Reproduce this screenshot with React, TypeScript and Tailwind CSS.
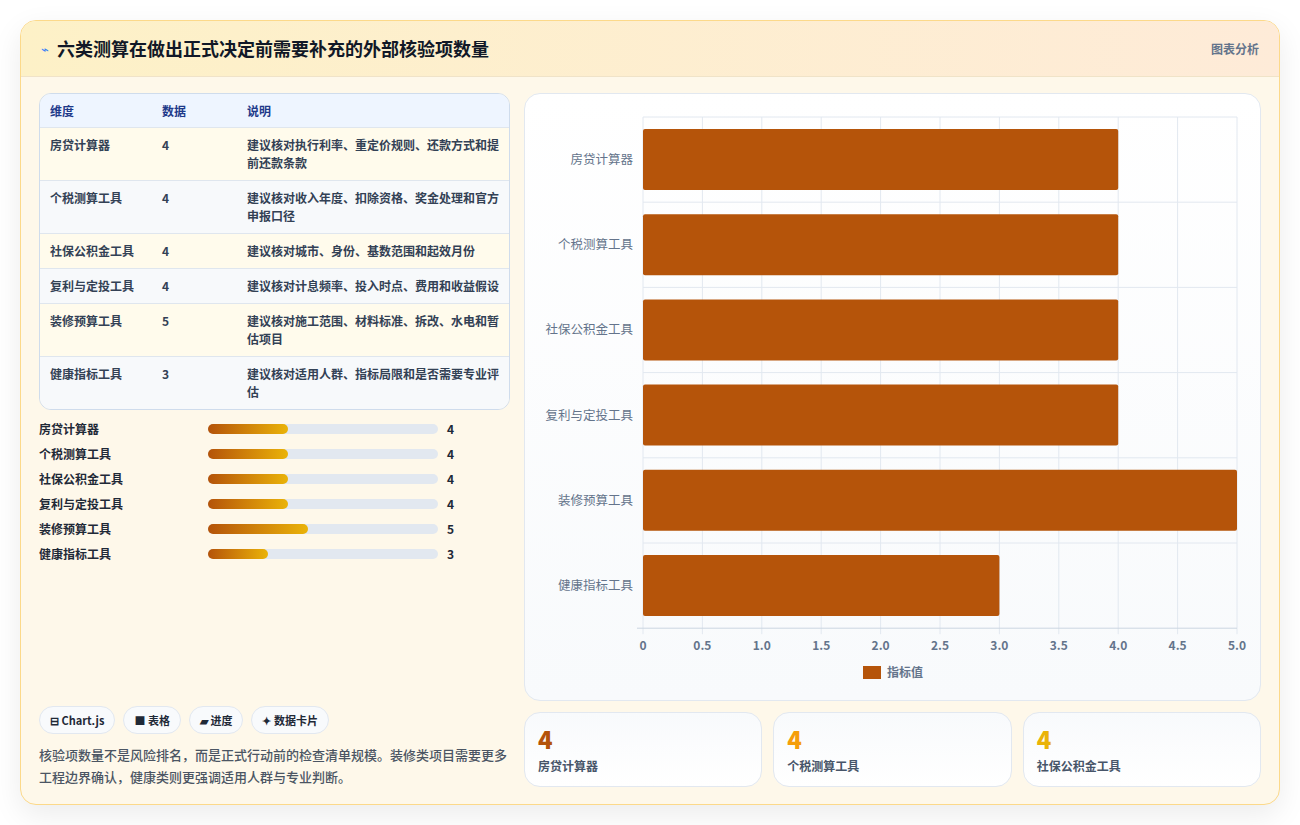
const rows = [
  { name: "房贷计算器", v: 4, note: "建议核对执行利率、重定价规则、还款方式和提前还款条款" },
  { name: "个税测算工具", v: 4, note: "建议核对收入年度、扣除资格、奖金处理和官方申报口径" },
  { name: "社保公积金工具", v: 4, note: "建议核对城市、身份、基数范围和起效月份" },
  { name: "复利与定投工具", v: 4, note: "建议核对计息频率、投入时点、费用和收益假设" },
  { name: "装修预算工具", v: 5, note: "建议核对施工范围、材料标准、拆改、水电和暂估项目" },
  { name: "健康指标工具", v: 3, note: "建议核对适用人群、指标局限和是否需要专业评估" },
];

const font = { fontFamily: '"Noto Sans CJK SC", "Liberation Sans", sans-serif' };

function Chart() {
  const x0 = 118, x1 = 712, y0 = 23, rowH = 85.2;
  const sx = (v: number) => x0 + ((x1 - x0) * v) / 5;
  const ticks = [0, 0.5, 1, 1.5, 2, 2.5, 3, 3.5, 4, 4.5, 5];
  return (
    <svg width="735" height="606" style={font}>
      {ticks.map((t) => (
        <line key={t} x1={sx(t)} x2={sx(t)} y1={y0} y2={y0 + rowH * 6 + 6} stroke="#e2e8f0" />
      ))}
      {rows.map((_, i) => (
        <line key={i} x1={x0} x2={x1} y1={y0 + rowH * i} y2={y0 + rowH * i} stroke="#e2e8f0" />
      ))}
      <line x1={x0 - 6} x2={x1} y1={y0 + rowH * 6} y2={y0 + rowH * 6} stroke="#cbd5e1" />
      {rows.map((r, i) => (
        <g key={r.name}>
          <rect x={x0} y={y0 + rowH * i + 12} width={sx(r.v) - x0} height={61} rx="2" fill="#b5540a" />
          <text x={x0 - 10} y={y0 + rowH * i + 47} textAnchor="end" fontSize="12.5" fill="#64748b">{r.name}</text>
        </g>
      ))}
      {ticks.map((t) => (
        <text key={t} x={sx(t)} y={556} textAnchor="middle" fontSize="12" fontWeight="700" fill="#64748b">
          {t === 0 || t === 5 ? (t === 5 ? "5.0" : "0") : t.toFixed(1)}
        </text>
      ))}
      <rect x={338} y={572} width={18} height={13} fill="#b5540a" />
      <text x={362} y={583} fontSize="12" fontWeight="700" fill="#64748b">指标值</text>
    </svg>
  );
}

export default function App() {
  return (
    <div className="min-h-[825px] bg-white p-5" style={font}>
      <div className="flex h-[785px] flex-col overflow-hidden rounded-2xl border border-[#fcd98a] bg-[#fef8ea] shadow-[0_10px_30px_rgba(0,0,0,0.08)]">
        <div className="flex h-[56px] items-center justify-between border-b border-[#f0e3c8] bg-gradient-to-r from-[#fdf1c7] to-[#feebd8] px-[20px]">
          <div className="flex items-center gap-2">
            <span className="text-[13px] text-[#3b82f6]">⌁</span>
            <h1 className="text-[18px] font-bold text-[#111827]">六类测算在做出正式决定前需要补充的外部核验项数量</h1>
          </div>
          <span className="text-[12px] font-semibold text-[#64748b]">图表分析</span>
        </div>
        <div className="flex flex-1 gap-[14px] px-[18px] pt-[16px] pb-[16px]">
          <div className="flex w-[472px] flex-col">
            <div className="overflow-hidden rounded-xl border border-[#cfdcec] text-[12px]">
              <div className="flex h-[33px] items-center bg-[#eef5ff] font-semibold text-[#1e3a8a]">
                <div className="w-[112px] pl-[10px]">维度</div>
                <div className="w-[85px] pl-[10px]">数据</div>
                <div className="flex-1 pl-[10px]">说明</div>
              </div>
              {rows.map((r, i) => (
                <div key={r.name} className={`flex items-start border-t border-[#dfe6ee] py-[8px] font-semibold text-[#334155] ${i % 2 === 0 ? "bg-[#fffbec]" : "bg-[#f7f9fb]"}`}>
                  <div className="w-[112px] pl-[10px] leading-[18px]">{r.name}</div>
                  <div className="w-[85px] pl-[10px] leading-[18px]">{r.v}</div>
                  <div className="flex-1 pl-[10px] pr-[10px] leading-[18px]">{r.note}</div>
                </div>
              ))}
            </div>
            <div className="mt-[10px] flex flex-col gap-[7px]">
              {rows.map((r) => (
                <div key={r.name} className="flex h-[18px] items-center text-[12px] font-semibold text-[#1f2937]">
                  <div className="w-[169px]">{r.name}</div>
                  <div className="h-[10px] w-[230px] rounded-full bg-[#e2e8f0]">
                    <div className="h-full rounded-full bg-gradient-to-r from-[#b45309] to-[#eab308]" style={{ width: r.v * 20 }} />
                  </div>
                  <div className="ml-[9px] text-[#1f2937]">{r.v}</div>
                </div>
              ))}
            </div>
            <div className="mt-auto flex gap-[8px]">
              {["⊟ Chart.js", "■ 表格", "▰ 进度", "✦ 数据卡片"].map((c) => (
                <span key={c} className="rounded-full border border-[#e2e8f0] bg-[#f8fafc] px-[10px] py-[5px] text-[11px] font-semibold text-[#1f2937]">{c}</span>
              ))}
            </div>
            <p className="mt-[10px] text-[13px] font-medium leading-[22px] text-[#4b5563]">
              核验项数量不是风险排名，而是正式行动前的检查清单规模。装修类项目需要更多工程边界确认，健康类则更强调适用人群与专业判断。
            </p>
          </div>
          <div className="flex flex-1 flex-col gap-[11px]">
            <div className="h-[608px] rounded-2xl border border-[#e2e8f0] bg-gradient-to-b from-white to-[#f8fafc]">
              <Chart />
            </div>
            <div className="grid grid-cols-3 gap-[11px]">
              {[
                { n: rows[0], c: "text-[#b45309]" },
                { n: rows[1], c: "text-[#f59e0b]" },
                { n: rows[2], c: "text-[#eab308]" },
              ].map(({ n, c }) => (
                <div key={n.name} className="h-[75px] rounded-2xl border border-[#e2e8f0] bg-gradient-to-b from-[#f8fafc] to-white px-[13px] pt-[10px]">
                  <div className={`text-[24px] font-extrabold leading-[32px] ${c}`}>{n.v}</div>
                  <div className="mt-[2px] text-[12px] font-semibold text-[#475569]">{n.name}</div>
                </div>
              ))}
            </div>
          </div>
        </div>
      </div>
    </div>
  );
}
